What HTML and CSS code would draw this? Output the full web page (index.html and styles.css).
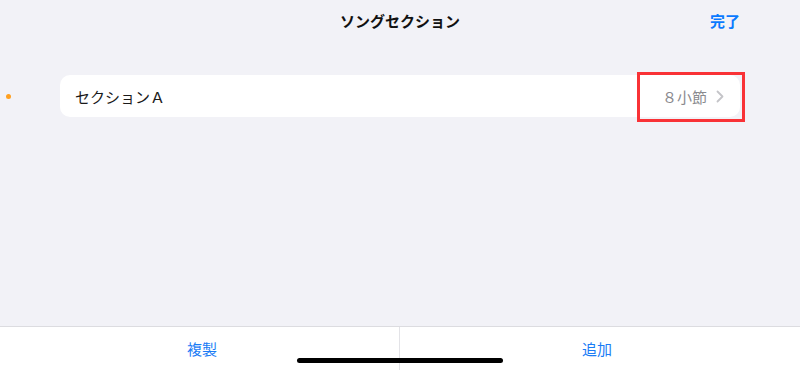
FILE: index.html
```html
<!DOCTYPE html>
<html lang="ja">
<head>
<meta charset="utf-8">
<link rel="stylesheet" href="styles.css">
</head>
<body>
<div class="screen">
  <header class="nav">
    <div class="nav-side"></div>
    <div class="nav-title">ソングセクション</div>
    <div class="nav-side nav-right"><span class="done">完了</span></div>
  </header>
  <main class="content">
    <div class="row">
      <span class="dot"></span>
      <div class="card">
        <span class="card-title">セクションＡ</span>
        <span class="card-detail">
          <span class="bars">８小節</span>
          <svg class="chev" width="8" height="13" viewBox="0 0 8 13"><polyline points="1.5,1.5 6.5,6.5 1.5,11.5" fill="none" stroke="#c4c4c8" stroke-width="1.8" stroke-linecap="round" stroke-linejoin="round"/></svg>
        </span>
        <span class="highlight"></span>
      </div>
    </div>
  </main>
  <footer class="toolbar">
    <div class="tool tool-left">複製</div>
    <div class="tool tool-right">追加</div>
    <span class="home"></span>
  </footer>
</div>
</body>
</html>
```

FILE: styles.css
```css
* { box-sizing: border-box; }
html, body { margin: 0; padding: 0; }
body {
  width: 800px;
  height: 370px;
  overflow: hidden;
  background: #f2f2f7;
  font-family: "Noto Sans CJK JP", "Noto Sans", sans-serif;
  color: #000;
}
.screen {
  position: relative;
  width: 800px;
  height: 370px;
  display: flex;
  flex-direction: column;
}
.nav {
  height: 41px;
  display: grid;
  grid-template-columns: 1fr auto 1fr;
  align-items: center;
}
.nav-title {
  font-size: 15px;
  font-weight: 700;
  color: #111;
}
.nav-right {
  display: flex;
  justify-content: flex-end;
  padding-right: 60px;
}
.done {
  font-size: 15px;
  font-weight: 700;
  color: #0a7aff;
}
.content {
  flex: 1;
  padding-top: 34px;
}
.row {
  display: flex;
  align-items: center;
  padding-left: 6px;
  padding-right: 60px;
}
.dot {
  width: 5px;
  height: 5px;
  border-radius: 50%;
  background: #ffa020;
  margin-right: 49px;
  margin-top: 1px;
}
.card {
  position: relative;
  flex: 1;
  height: 42px;
  background: #fff;
  border-radius: 10px;
  display: flex;
  align-items: center;
  justify-content: space-between;
  padding: 0 16px 0 15px;
}
.card-title {
  font-size: 15px;
  color: #1a1a1a;
}
.card-detail {
  display: flex;
  align-items: center;
  gap: 9px;
}
.bars {
  font-size: 15px;
  color: #8a8a8e;
}
.chev { display: block; }
.highlight {
  position: absolute;
  top: -3px;
  right: -5px;
  width: 108px;
  height: 50px;
  border: 3px solid #f93236;
}
.toolbar {
  position: relative;
  height: 44px;
  background: #fff;
  border-top: 1px solid #dcdce0;
  display: flex;
}
.tool {
  flex: 1;
  display: flex;
  align-items: center;
  justify-content: center;
  font-size: 15px;
  color: #1a7cf5;
}
.tool-left { padding-left: 5px; }
.tool-right {
  border-left: 1px solid #e3e3e7;
  padding-right: 6px;
}
.home {
  position: absolute;
  left: 297px;
  top: 31px;
  width: 206px;
  height: 5px;
  border-radius: 3px;
  background: #000;
}
```
